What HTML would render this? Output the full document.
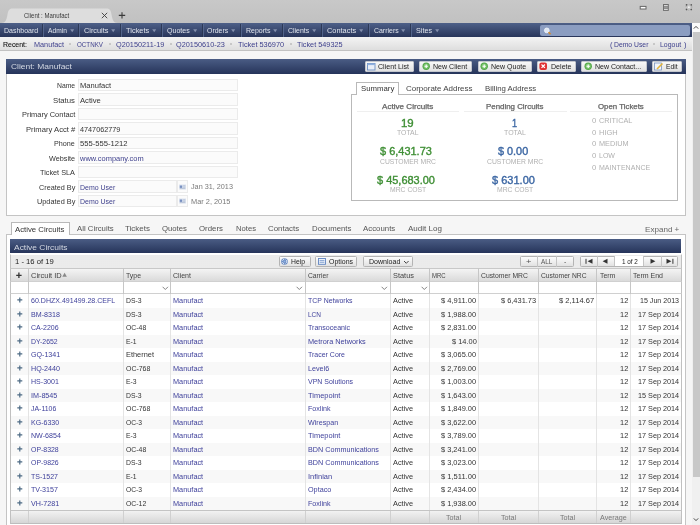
<!DOCTYPE html><html><head><meta charset="utf-8"><style>
*{margin:0;padding:0;box-sizing:border-box}
html,body{width:700px;height:525px;overflow:hidden;background:#f6f6f6;font-family:"Liberation Sans",sans-serif;}
.t{position:absolute;white-space:pre;transform-origin:0 0;}
.r{position:absolute;}
svg{position:absolute;overflow:visible}
#w{position:absolute;left:0;top:0;width:700px;height:525px;overflow:hidden;will-change:transform;}
</style></head><body><div id="w"><div class="r" style="left:0.00px;top:0.00px;width:700.00px;height:23.00px;background:linear-gradient(#c8c8c8,#c1c1c1);"></div>
<svg style="left:0.00px;top:0.00px" width="130" height="23" viewBox="0 0 130 23"><path d="M1.5,23 C5.5,23 6.6,19.5 7.5,14.5 C8.3,10 9.6,8.6 12.8,8.6 L106.5,8.6 C109.7,8.6 110.6,10 111.5,14.5 C112.4,19.5 113.5,23 117.5,23 Z" fill="#dddddd"/><path d="M101.8,12.8 L107.2,18.2 M107.2,12.8 L101.8,18.2" stroke="#3c3c3c" stroke-width="0.9"/><path d="M118.8,15.4 L125.2,15.4 M122,12.2 L122,18.6" stroke="#3a3a3a" stroke-width="1.1"/></svg>
<div class="t" style="left:23.80px;top:10.60px;font-size:7.50px;line-height:10px;color:#3a3a3a;transform:scaleX(0.8032);">Client : Manufact</div>
<svg style="left:630.00px;top:0.00px" width="70" height="23" viewBox="0 0 70 23"><rect x="10.2" y="6.4" width="5.8" height="2.6" fill="#fff" stroke="#666" stroke-width="1"/><rect x="33" y="4" width="5.8" height="6.9" fill="#6f6f6f"/><rect x="34" y="5.2" width="3.8" height="1" fill="#f2f2f2"/><rect x="34" y="8.8" width="3.8" height="1" fill="#f2f2f2"/><rect x="34" y="6.6" width="3.8" height="1.8" fill="#9a9a9a"/><circle cx="58.9" cy="7.25" r="2.9" fill="none" stroke="#9a9a9a" stroke-width="0.8" stroke-dasharray="1.2 1.1"/><circle cx="56.5" cy="4.9" r="0.8" fill="#555"/><circle cx="61.3" cy="4.9" r="0.8" fill="#555"/><circle cx="56.5" cy="9.6" r="0.8" fill="#555"/><circle cx="61.3" cy="9.6" r="0.8" fill="#555"/><circle cx="58.9" cy="7.25" r="1" fill="#f0f0f0"/></svg>
<div class="r" style="left:0.00px;top:23.00px;width:692.00px;height:13.80px;background:linear-gradient(#4e6088,#28355a);"></div>
<div class="r" style="left:41.50px;top:23.50px;width:1.00px;height:13.30px;background:#27324e;opacity:.8;"></div>
<div class="r" style="left:42.50px;top:23.50px;width:1.00px;height:13.30px;background:#5a6b92;opacity:.8;"></div>
<div class="r" style="left:77.50px;top:23.50px;width:1.00px;height:13.30px;background:#27324e;opacity:.8;"></div>
<div class="r" style="left:78.50px;top:23.50px;width:1.00px;height:13.30px;background:#5a6b92;opacity:.8;"></div>
<div class="r" style="left:119.50px;top:23.50px;width:1.00px;height:13.30px;background:#27324e;opacity:.8;"></div>
<div class="r" style="left:120.50px;top:23.50px;width:1.00px;height:13.30px;background:#5a6b92;opacity:.8;"></div>
<div class="r" style="left:160.50px;top:23.50px;width:1.00px;height:13.30px;background:#27324e;opacity:.8;"></div>
<div class="r" style="left:161.50px;top:23.50px;width:1.00px;height:13.30px;background:#5a6b92;opacity:.8;"></div>
<div class="r" style="left:201.50px;top:23.50px;width:1.00px;height:13.30px;background:#27324e;opacity:.8;"></div>
<div class="r" style="left:202.50px;top:23.50px;width:1.00px;height:13.30px;background:#5a6b92;opacity:.8;"></div>
<div class="r" style="left:239.50px;top:23.50px;width:1.00px;height:13.30px;background:#27324e;opacity:.8;"></div>
<div class="r" style="left:240.50px;top:23.50px;width:1.00px;height:13.30px;background:#5a6b92;opacity:.8;"></div>
<div class="r" style="left:281.50px;top:23.50px;width:1.00px;height:13.30px;background:#27324e;opacity:.8;"></div>
<div class="r" style="left:282.50px;top:23.50px;width:1.00px;height:13.30px;background:#5a6b92;opacity:.8;"></div>
<div class="r" style="left:320.50px;top:23.50px;width:1.00px;height:13.30px;background:#27324e;opacity:.8;"></div>
<div class="r" style="left:321.50px;top:23.50px;width:1.00px;height:13.30px;background:#5a6b92;opacity:.8;"></div>
<div class="r" style="left:367.50px;top:23.50px;width:1.00px;height:13.30px;background:#27324e;opacity:.8;"></div>
<div class="r" style="left:368.50px;top:23.50px;width:1.00px;height:13.30px;background:#5a6b92;opacity:.8;"></div>
<div class="r" style="left:409.50px;top:23.50px;width:1.00px;height:13.30px;background:#27324e;opacity:.8;"></div>
<div class="r" style="left:410.50px;top:23.50px;width:1.00px;height:13.30px;background:#5a6b92;opacity:.8;"></div>
<div class="t" style="left:3.80px;top:26.40px;font-size:6.73px;line-height:10px;color:#dfe3eb;transform:scaleX(1.0417);">Dashboard</div>
<div class="t" style="left:47.80px;top:26.40px;font-size:6.73px;line-height:10px;color:#dfe3eb;transform:scaleX(0.9904);">Admin</div>
<svg style="left:70.10px;top:28.60px" width="5" height="4" viewBox="0 0 5 4"><path d="M0.2,0.3 L4.2,0.3 L2.2,3.3 Z" fill="#8490ad"/></svg>
<div class="t" style="left:84.10px;top:26.40px;font-size:6.73px;line-height:10px;color:#dfe3eb;transform:scaleX(1.0917);">Circuits</div>
<svg style="left:111.40px;top:28.60px" width="5" height="4" viewBox="0 0 5 4"><path d="M0.2,0.3 L4.2,0.3 L2.2,3.3 Z" fill="#8490ad"/></svg>
<div class="t" style="left:125.70px;top:26.40px;font-size:6.73px;line-height:10px;color:#dfe3eb;transform:scaleX(1.1059);">Tickets</div>
<svg style="left:152.10px;top:28.60px" width="5" height="4" viewBox="0 0 5 4"><path d="M0.2,0.3 L4.2,0.3 L2.2,3.3 Z" fill="#8490ad"/></svg>
<div class="t" style="left:166.90px;top:26.40px;font-size:6.73px;line-height:10px;color:#dfe3eb;transform:scaleX(1.0507);">Quotes</div>
<svg style="left:192.80px;top:28.60px" width="5" height="4" viewBox="0 0 5 4"><path d="M0.2,0.3 L4.2,0.3 L2.2,3.3 Z" fill="#8490ad"/></svg>
<div class="t" style="left:206.90px;top:26.40px;font-size:6.73px;line-height:10px;color:#dfe3eb;transform:scaleX(1.0306);">Orders</div>
<svg style="left:231.40px;top:28.60px" width="5" height="4" viewBox="0 0 5 4"><path d="M0.2,0.3 L4.2,0.3 L2.2,3.3 Z" fill="#8490ad"/></svg>
<div class="t" style="left:245.70px;top:26.40px;font-size:6.73px;line-height:10px;color:#dfe3eb;transform:scaleX(1.0397);">Reports</div>
<svg style="left:273.20px;top:28.60px" width="5" height="4" viewBox="0 0 5 4"><path d="M0.2,0.3 L4.2,0.3 L2.2,3.3 Z" fill="#8490ad"/></svg>
<div class="t" style="left:288.00px;top:26.40px;font-size:6.73px;line-height:10px;color:#dfe3eb;transform:scaleX(1.0352);">Clients</div>
<svg style="left:312.10px;top:28.60px" width="5" height="4" viewBox="0 0 5 4"><path d="M0.2,0.3 L4.2,0.3 L2.2,3.3 Z" fill="#8490ad"/></svg>
<div class="t" style="left:326.90px;top:26.40px;font-size:6.73px;line-height:10px;color:#dfe3eb;transform:scaleX(1.0994);">Contacts</div>
<svg style="left:358.90px;top:28.60px" width="5" height="4" viewBox="0 0 5 4"><path d="M0.2,0.3 L4.2,0.3 L2.2,3.3 Z" fill="#8490ad"/></svg>
<div class="t" style="left:373.70px;top:26.40px;font-size:6.73px;line-height:10px;color:#dfe3eb;transform:scaleX(1.0319);">Carriers</div>
<svg style="left:401.20px;top:28.60px" width="5" height="4" viewBox="0 0 5 4"><path d="M0.2,0.3 L4.2,0.3 L2.2,3.3 Z" fill="#8490ad"/></svg>
<div class="t" style="left:415.50px;top:26.40px;font-size:6.73px;line-height:10px;color:#dfe3eb;transform:scaleX(1.0693);">Sites</div>
<svg style="left:434.80px;top:28.60px" width="5" height="4" viewBox="0 0 5 4"><path d="M0.2,0.3 L4.2,0.3 L2.2,3.3 Z" fill="#8490ad"/></svg>
<div class="r" style="left:539.80px;top:24.60px;width:150.20px;height:11.40px;background:#8b9dc1;border-radius:2px;"></div>
<svg style="left:543.00px;top:27.00px" width="10" height="9" viewBox="0 0 10 9"><circle cx="3.8" cy="3.4" r="2.4" fill="#dfe7f4" stroke="#f4f7fb" stroke-width="0.8"/><path d="M5.5,5.2 L7.6,7.3" stroke="#d58a2a" stroke-width="1.6"/></svg>
<div class="r" style="left:692.00px;top:23.00px;width:8.00px;height:502.00px;background:#f0f0f0;"></div>
<div class="r" style="left:692.00px;top:23.00px;width:8.00px;height:9.00px;background:#fafafa;"></div>
<div class="r" style="left:693.00px;top:32.00px;width:7.00px;height:444.50px;background:#c8c8c8;"></div>
<svg style="left:692.00px;top:23.00px" width="8" height="9" viewBox="0 0 8 9"><path d="M1.8,5.6 L4,3.4 L6.2,5.6" fill="none" stroke="#333" stroke-width="0.9"/></svg>
<svg style="left:692.00px;top:515.00px" width="8" height="9" viewBox="0 0 8 9"><path d="M1.8,3.4 L4,5.6 L6.2,3.4" fill="none" stroke="#333" stroke-width="0.9"/></svg>
<div class="r" style="left:0.00px;top:36.80px;width:692.00px;height:12.80px;background:linear-gradient(#f4f4f4,#dedede);"></div>
<div class="r" style="left:0.00px;top:49.60px;width:692.00px;height:1.00px;background:#c2c2c2;"></div>
<div class="t" style="left:3.10px;top:40.30px;font-size:6.78px;line-height:10px;color:#111;transform:scaleX(1.0266);-webkit-text-stroke:0.08px #000;">Recent:</div>
<div class="t" style="left:33.90px;top:40.30px;font-size:6.78px;line-height:10px;color:#3d3f8c;transform:scaleX(1.0752);">Manufact</div>
<div class="t" style="left:77.00px;top:40.30px;font-size:6.78px;line-height:10px;color:#3d3f8c;transform:scaleX(0.9197);">OCTNKV</div>
<div class="t" style="left:115.60px;top:40.30px;font-size:6.78px;line-height:10px;color:#3d3f8c;transform:scaleX(1.0813);">Q20150211-19</div>
<div class="t" style="left:176.40px;top:40.30px;font-size:6.78px;line-height:10px;color:#3d3f8c;transform:scaleX(1.0804);">Q20150610-23</div>
<div class="t" style="left:237.60px;top:40.30px;font-size:6.78px;line-height:10px;color:#3d3f8c;transform:scaleX(1.0929);">Ticket 536970</div>
<div class="t" style="left:297.30px;top:40.30px;font-size:6.78px;line-height:10px;color:#3d3f8c;transform:scaleX(1.0787);">Ticket 549325</div>
<div class="r" style="left:69.40px;top:43.30px;width:2.00px;height:2.00px;background:#bcbcbc;border-radius:1px;"></div>
<div class="r" style="left:108.60px;top:43.30px;width:2.00px;height:2.00px;background:#bcbcbc;border-radius:1px;"></div>
<div class="r" style="left:169.60px;top:43.30px;width:2.00px;height:2.00px;background:#bcbcbc;border-radius:1px;"></div>
<div class="r" style="left:230.20px;top:43.30px;width:2.00px;height:2.00px;background:#bcbcbc;border-radius:1px;"></div>
<div class="r" style="left:289.90px;top:43.30px;width:2.00px;height:2.00px;background:#bcbcbc;border-radius:1px;"></div>
<div class="t" style="left:609.50px;top:40.30px;font-size:6.78px;line-height:10px;color:#3d3f8c;transform:scaleX(1.1049);">(</div>
<div class="t" style="left:613.70px;top:40.30px;font-size:6.78px;line-height:10px;color:#3d3f8c;transform:scaleX(1.0056);">Demo User</div>
<div class="r" style="left:653.20px;top:43.30px;width:2.00px;height:2.00px;background:#bcbcbc;border-radius:1px;"></div>
<div class="t" style="left:660.00px;top:40.30px;font-size:6.78px;line-height:10px;color:#3d3f8c;transform:scaleX(1.0216);">Logout</div>
<div class="t" style="left:684.00px;top:40.30px;font-size:6.78px;line-height:10px;color:#3d3f8c;transform:scaleX(1.1049);">)</div>
<div class="r" style="left:6.00px;top:58.50px;width:680.00px;height:157.50px;background:#fff;border:1px solid #c4c4c4;"></div>
<div class="r" style="left:6.00px;top:58.50px;width:680.00px;height:15.30px;background:linear-gradient(#4a5c84,#26345a);"></div>
<div class="t" style="left:11.00px;top:62.40px;font-size:7.89px;line-height:10px;color:#d4d9e3;transform:scaleX(1.0704);">Client: Manufact</div>
<div class="r" style="left:364.70px;top:60.70px;width:49.30px;height:11.40px;background:linear-gradient(#f8f8f8,#e2e2e2);border:1px solid #c4c7ce;border-radius:1px;"></div>
<svg style="left:367px;top:62.8px" width="9" height="8"><rect x="0.5" y="0.5" width="7.5" height="6.5" fill="#e8eef8" stroke="#6d8fc4" stroke-width="0.9"/><rect x="0.5" y="0.5" width="7.5" height="1.6" fill="#8fb0e0"/></svg>
<div class="t" style="left:378.00px;top:62.40px;font-size:6.68px;line-height:10px;color:#222;transform:scaleX(1.0606);">Client List</div>
<div class="r" style="left:419.30px;top:60.70px;width:52.70px;height:11.40px;background:linear-gradient(#f8f8f8,#e2e2e2);border:1px solid #c4c7ce;border-radius:1px;"></div>
<svg style="left:421.5px;top:62.2px" width="9" height="9"><circle cx="4.2" cy="4.2" r="3.7" fill="#55a84a"/><circle cx="4.2" cy="4.2" r="2.6" fill="#7cc56e"/><path d="M2.5,4.2 L5.9,4.2 M4.2,2.5 L4.2,5.9" stroke="#fff" stroke-width="1.1"/></svg>
<div class="t" style="left:432.70px;top:62.40px;font-size:6.68px;line-height:10px;color:#222;transform:scaleX(1.0592);">New Client</div>
<div class="r" style="left:477.70px;top:60.70px;width:54.30px;height:11.40px;background:linear-gradient(#f8f8f8,#e2e2e2);border:1px solid #c4c7ce;border-radius:1px;"></div>
<svg style="left:480px;top:62.2px" width="9" height="9"><circle cx="4.2" cy="4.2" r="3.7" fill="#55a84a"/><circle cx="4.2" cy="4.2" r="2.6" fill="#7cc56e"/><path d="M2.5,4.2 L5.9,4.2 M4.2,2.5 L4.2,5.9" stroke="#fff" stroke-width="1.1"/></svg>
<div class="t" style="left:490.80px;top:62.40px;font-size:6.68px;line-height:10px;color:#222;transform:scaleX(1.0538);">New Quote</div>
<div class="r" style="left:536.80px;top:60.70px;width:39.40px;height:11.40px;background:linear-gradient(#f8f8f8,#e2e2e2);border:1px solid #c4c7ce;border-radius:1px;"></div>
<svg style="left:539px;top:62.4px" width="9" height="9"><rect x="0.4" y="0.4" width="7.6" height="7.6" rx="2" fill="#e03030"/><path d="M2.5,2.5 L5.9,5.9 M5.9,2.5 L2.5,5.9" stroke="#fff" stroke-width="1.2"/></svg>
<div class="t" style="left:550.50px;top:62.40px;font-size:6.68px;line-height:10px;color:#222;transform:scaleX(1.0618);">Delete</div>
<div class="r" style="left:581.10px;top:60.70px;width:66.00px;height:11.40px;background:linear-gradient(#f8f8f8,#e2e2e2);border:1px solid #c4c7ce;border-radius:1px;"></div>
<svg style="left:583.5px;top:62.2px" width="9" height="9"><circle cx="4.2" cy="4.2" r="3.7" fill="#55a84a"/><circle cx="4.2" cy="4.2" r="2.6" fill="#7cc56e"/><path d="M2.5,4.2 L5.9,4.2 M4.2,2.5 L4.2,5.9" stroke="#fff" stroke-width="1.1"/></svg>
<div class="t" style="left:595.00px;top:62.40px;font-size:6.68px;line-height:10px;color:#222;transform:scaleX(1.0549);">New Contact...</div>
<div class="r" style="left:652.30px;top:60.70px;width:30.20px;height:11.40px;background:linear-gradient(#f8f8f8,#e2e2e2);border:1px solid #c4c7ce;border-radius:1px;"></div>
<svg style="left:654.3px;top:62.4px" width="10" height="9"><rect x="0.5" y="1" width="7" height="7" fill="#f2f5fa" stroke="#7b95c0" stroke-width="0.8"/><path d="M3,7 L8.5,1.5" stroke="#e2b33a" stroke-width="1.6"/></svg>
<div class="t" style="left:665.70px;top:62.40px;font-size:6.68px;line-height:10px;color:#222;transform:scaleX(0.9995);">Edit</div>
<div class="t" style="left:56.90px;top:81.20px;font-size:6.89px;line-height:10px;color:#333;transform:scaleX(0.9901);">Name</div>
<div class="r" style="left:78.00px;top:78.90px;width:160.00px;height:12.50px;background:#fbfbfb;border:1px solid #ebebeb;"></div>
<div class="t" style="left:79.50px;top:81.20px;font-size:6.89px;line-height:10px;color:#333;transform:scaleX(1.1010);">Manufact</div>
<div class="t" style="left:53.10px;top:95.70px;font-size:6.89px;line-height:10px;color:#333;transform:scaleX(1.1263);">Status</div>
<div class="r" style="left:78.00px;top:93.40px;width:160.00px;height:12.50px;background:#fbfbfb;border:1px solid #ebebeb;"></div>
<div class="t" style="left:79.50px;top:95.70px;font-size:6.89px;line-height:10px;color:#333;transform:scaleX(1.1140);">Active</div>
<div class="t" style="left:21.60px;top:110.20px;font-size:6.89px;line-height:10px;color:#333;transform:scaleX(1.0831);">Primary Contact</div>
<div class="r" style="left:78.00px;top:107.90px;width:160.00px;height:12.50px;background:#fbfbfb;border:1px solid #ebebeb;"></div>
<div class="t" style="left:25.70px;top:124.70px;font-size:6.89px;line-height:10px;color:#333;transform:scaleX(1.1123);">Primary Acct #</div>
<div class="r" style="left:78.00px;top:122.40px;width:160.00px;height:12.50px;background:#fbfbfb;border:1px solid #ebebeb;"></div>
<div class="t" style="left:79.50px;top:124.70px;font-size:6.89px;line-height:10px;color:#333;transform:scaleX(1.0568);">4747062779</div>
<div class="t" style="left:54.20px;top:139.20px;font-size:6.89px;line-height:10px;color:#333;transform:scaleX(1.0489);">Phone</div>
<div class="r" style="left:78.00px;top:136.90px;width:160.00px;height:12.50px;background:#fbfbfb;border:1px solid #ebebeb;"></div>
<div class="t" style="left:79.50px;top:139.20px;font-size:6.89px;line-height:10px;color:#333;transform:scaleX(1.1116);">555-555-1212</div>
<div class="t" style="left:49.00px;top:153.70px;font-size:6.89px;line-height:10px;color:#333;transform:scaleX(1.0540);">Website</div>
<div class="r" style="left:78.00px;top:151.40px;width:160.00px;height:12.50px;background:#fbfbfb;border:1px solid #ebebeb;"></div>
<div class="t" style="left:79.51px;top:153.70px;font-size:6.89px;line-height:10px;color:#3d3f8c;transform:scaleX(1.0840);">www.company.com</div>
<div class="t" style="left:40.10px;top:168.20px;font-size:6.89px;line-height:10px;color:#333;transform:scaleX(1.0587);">Ticket SLA</div>
<div class="r" style="left:78.00px;top:165.90px;width:160.00px;height:12.50px;background:#fbfbfb;border:1px solid #ebebeb;"></div>
<div class="t" style="left:38.70px;top:182.70px;font-size:6.89px;line-height:10px;color:#333;transform:scaleX(1.0562);">Created By</div>
<div class="r" style="left:78.00px;top:180.40px;width:98.80px;height:12.50px;background:#fbfbfb;border:1px solid #ebebeb;"></div>
<div class="t" style="left:79.50px;top:182.70px;font-size:6.89px;line-height:10px;color:#3d3f8c;transform:scaleX(1.0131);">Demo User</div>
<div class="r" style="left:177.30px;top:180.40px;width:10.70px;height:12.50px;background:#fbfbfb;border:1px solid #ebebeb;"></div>
<svg style="left:179.00px;top:183.70px" width="8" height="6" viewBox="0 0 8 6"><rect x="0" y="0.5" width="7" height="5" fill="#dde4f0"/><rect x="0.8" y="1.5" width="2.4" height="2.4" fill="#7890c0"/><path d="M4.1,1.8 H6.3 M4.1,3.2 H6.3 M1,4.6 H6.3" stroke="#a0aec8" stroke-width="0.6"/></svg>
<div class="t" style="left:36.70px;top:197.20px;font-size:6.89px;line-height:10px;color:#333;transform:scaleX(1.0665);">Updated By</div>
<div class="r" style="left:78.00px;top:194.90px;width:98.80px;height:12.50px;background:#fbfbfb;border:1px solid #ebebeb;"></div>
<div class="t" style="left:79.50px;top:197.20px;font-size:6.89px;line-height:10px;color:#3d3f8c;transform:scaleX(1.0131);">Demo User</div>
<div class="r" style="left:177.30px;top:194.90px;width:10.70px;height:12.50px;background:#fbfbfb;border:1px solid #ebebeb;"></div>
<svg style="left:179.00px;top:198.20px" width="8" height="6" viewBox="0 0 8 6"><rect x="0" y="0.5" width="7" height="5" fill="#dde4f0"/><rect x="0.8" y="1.5" width="2.4" height="2.4" fill="#7890c0"/><path d="M4.1,1.8 H6.3 M4.1,3.2 H6.3 M1,4.6 H6.3" stroke="#a0aec8" stroke-width="0.6"/></svg>
<div class="t" style="left:191.00px;top:182.40px;font-size:6.89px;line-height:10px;color:#7a7a7a;transform:scaleX(1.0541);">Jan 31, 2013</div>
<div class="t" style="left:191.00px;top:196.90px;font-size:6.89px;line-height:10px;color:#7a7a7a;transform:scaleX(1.0744);">Mar 2, 2015</div>
<div class="r" style="left:351.00px;top:94.00px;width:327.00px;height:106.60px;background:#fff;border:1px solid #b9b9b9;"></div>
<div class="r" style="left:356.30px;top:82.20px;width:42.60px;height:13.00px;background:#fff;border:1px solid #b9b9b9;border-bottom:none;"></div>
<div class="t" style="left:360.60px;top:84.10px;font-size:7.31px;line-height:10px;color:#333;transform:scaleX(1.0675);">Summary</div>
<div class="t" style="left:406.00px;top:84.10px;font-size:7.31px;line-height:10px;color:#444;transform:scaleX(1.0937);">Corporate Address</div>
<div class="t" style="left:484.70px;top:84.10px;font-size:7.31px;line-height:10px;color:#444;transform:scaleX(1.0714);">Billing Address</div>
<div class="t" style="left:381.90px;top:102.00px;font-size:6.89px;line-height:10px;color:#666;transform:scaleX(1.1776);-webkit-text-stroke:0.25px currentColor;">Active Circuits</div>
<div class="t" style="left:485.70px;top:102.00px;font-size:6.89px;line-height:10px;color:#666;transform:scaleX(1.1482);-webkit-text-stroke:0.25px currentColor;">Pending Circuits</div>
<div class="t" style="left:598.20px;top:102.00px;font-size:6.89px;line-height:10px;color:#666;transform:scaleX(1.1415);-webkit-text-stroke:0.25px currentColor;">Open Tickets</div>
<div class="r" style="left:357.00px;top:110.80px;width:102.00px;height:1.00px;background:#efefef;"></div>
<div class="r" style="left:464.00px;top:110.80px;width:102.50px;height:1.00px;background:#efefef;"></div>
<div class="r" style="left:570.00px;top:110.80px;width:102.00px;height:1.00px;background:#efefef;"></div>
<div class="t" style="left:401.40px;top:117.70px;font-size:10.18px;line-height:12px;color:#3f8f35;transform:scaleX(1.1223);-webkit-text-stroke:0.35px currentColor;">19</div>
<div class="t" style="left:397.00px;top:127.90px;font-size:7.21px;line-height:10px;color:#b0b0b0;transform:scaleX(0.9530);">TOTAL</div>
<div class="t" style="left:380.30px;top:146.00px;font-size:10.18px;line-height:12px;color:#3f8f35;transform:scaleX(1.0790);-webkit-text-stroke:0.35px currentColor;">$ 6,431.73</div>
<div class="t" style="left:380.00px;top:156.90px;font-size:7.21px;line-height:10px;color:#b0b0b0;transform:scaleX(0.9407);">CUSTOMER MRC</div>
<div class="t" style="left:377.00px;top:174.70px;font-size:10.18px;line-height:12px;color:#3f8f35;transform:scaleX(1.0789);-webkit-text-stroke:0.35px currentColor;">$ 45,683.00</div>
<div class="t" style="left:389.80px;top:185.20px;font-size:7.21px;line-height:10px;color:#b0b0b0;transform:scaleX(0.9443);">MRC COST</div>
<div class="t" style="left:512.10px;top:117.70px;font-size:10.18px;line-height:12px;color:#3b66a3;transform:scaleX(0.9014);-webkit-text-stroke:0.35px currentColor;">1</div>
<div class="t" style="left:503.90px;top:127.90px;font-size:7.21px;line-height:10px;color:#b0b0b0;transform:scaleX(0.9707);">TOTAL</div>
<div class="t" style="left:497.70px;top:146.00px;font-size:10.18px;line-height:12px;color:#3b66a3;transform:scaleX(1.0675);-webkit-text-stroke:0.35px currentColor;">$ 0.00</div>
<div class="t" style="left:486.70px;top:156.90px;font-size:7.21px;line-height:10px;color:#b0b0b0;transform:scaleX(0.9457);">CUSTOMER MRC</div>
<div class="t" style="left:491.50px;top:174.70px;font-size:10.18px;line-height:12px;color:#3b66a3;transform:scaleX(1.0829);-webkit-text-stroke:0.35px currentColor;">$ 631.00</div>
<div class="t" style="left:496.70px;top:185.20px;font-size:7.21px;line-height:10px;color:#b0b0b0;transform:scaleX(0.9443);">MRC COST</div>
<div class="t" style="left:592.00px;top:116.30px;font-size:7.21px;line-height:10px;color:#b0b0b0;transform:scaleX(1.0791);">0</div>
<div class="t" style="left:599.00px;top:116.30px;font-size:7.21px;line-height:10px;color:#b0b0b0;transform:scaleX(1.0171);">CRITICAL</div>
<div class="t" style="left:592.00px;top:127.60px;font-size:7.21px;line-height:10px;color:#b0b0b0;transform:scaleX(1.0791);">0</div>
<div class="t" style="left:599.00px;top:127.60px;font-size:7.21px;line-height:10px;color:#b0b0b0;transform:scaleX(1.0377);">HIGH</div>
<div class="t" style="left:592.00px;top:139.20px;font-size:7.21px;line-height:10px;color:#b0b0b0;transform:scaleX(1.0791);">0</div>
<div class="t" style="left:599.00px;top:139.20px;font-size:7.21px;line-height:10px;color:#b0b0b0;transform:scaleX(1.0161);">MEDIUM</div>
<div class="t" style="left:592.00px;top:150.60px;font-size:7.21px;line-height:10px;color:#b0b0b0;transform:scaleX(1.0791);">0</div>
<div class="t" style="left:599.00px;top:150.60px;font-size:7.21px;line-height:10px;color:#b0b0b0;transform:scaleX(0.9744);">LOW</div>
<div class="t" style="left:592.00px;top:162.60px;font-size:7.21px;line-height:10px;color:#b0b0b0;transform:scaleX(1.0791);">0</div>
<div class="t" style="left:599.00px;top:162.60px;font-size:7.21px;line-height:10px;color:#b0b0b0;transform:scaleX(0.9779);">MAINTENANCE</div>
<div class="r" style="left:6.00px;top:234.00px;width:680.00px;height:296.00px;background:#fff;border:1px solid #c4c4c4;"></div>
<div class="r" style="left:11.00px;top:222.30px;width:58.50px;height:12.70px;background:#fff;border:1px solid #b9b9b9;border-bottom:none;"></div>
<div class="t" style="left:15.40px;top:224.50px;font-size:7.31px;line-height:10px;color:#333;transform:scaleX(1.0662);">Active Circuits</div>
<div class="t" style="left:76.60px;top:224.40px;font-size:7.31px;line-height:10px;color:#555;transform:scaleX(1.0653);">All Circuits</div>
<div class="t" style="left:125.00px;top:224.40px;font-size:7.31px;line-height:10px;color:#555;transform:scaleX(1.0920);">Tickets</div>
<div class="t" style="left:162.00px;top:224.40px;font-size:7.31px;line-height:10px;color:#555;transform:scaleX(1.0602);">Quotes</div>
<div class="t" style="left:199.40px;top:224.40px;font-size:7.31px;line-height:10px;color:#555;transform:scaleX(1.0737);">Orders</div>
<div class="t" style="left:235.60px;top:224.40px;font-size:7.31px;line-height:10px;color:#555;transform:scaleX(1.0469);">Notes</div>
<div class="t" style="left:267.80px;top:224.40px;font-size:7.31px;line-height:10px;color:#555;transform:scaleX(1.0810);">Contacts</div>
<div class="t" style="left:311.50px;top:224.40px;font-size:7.31px;line-height:10px;color:#555;transform:scaleX(1.0677);">Documents</div>
<div class="t" style="left:363.00px;top:224.40px;font-size:7.31px;line-height:10px;color:#555;transform:scaleX(1.0737);">Accounts</div>
<div class="t" style="left:408.00px;top:224.40px;font-size:7.31px;line-height:10px;color:#555;transform:scaleX(1.1000);">Audit Log</div>
<div class="t" style="left:645.00px;top:224.90px;font-size:7.31px;line-height:10px;color:#666;transform:scaleX(1.1059);">Expand +</div>
<div class="r" style="left:10.00px;top:239.10px;width:671.30px;height:14.40px;background:linear-gradient(#4a5c84,#26345a);"></div>
<div class="t" style="left:14.20px;top:242.90px;font-size:7.90px;line-height:10px;color:#d4d9e3;transform:scaleX(1.0694);">Active Circuits</div>
<div class="r" style="left:10.00px;top:253.50px;width:672.00px;height:14.90px;background-color:#f0f0f0;background-image:radial-gradient(circle,#e2e2e2 0.55px,transparent 0.8px);background-size:2px 2px;border-top:1px solid #fff;border-left:1px solid #c0c0c0;border-right:1px solid #c0c0c0;"></div>
<div class="t" style="left:14.90px;top:257.40px;font-size:6.89px;line-height:10px;color:#222;transform:scaleX(1.1131);">1 - 16 of 19</div>
<div class="r" style="left:278.60px;top:255.60px;width:32.10px;height:11.00px;background:linear-gradient(#fcfcfc,#e2e2e2);border:1px solid #b4b4b4;border-radius:1.5px;"></div>
<div class="r" style="left:315.40px;top:255.60px;width:42.00px;height:11.00px;background:linear-gradient(#fcfcfc,#e2e2e2);border:1px solid #b4b4b4;border-radius:1.5px;"></div>
<div class="r" style="left:363.20px;top:255.60px;width:49.90px;height:11.00px;background:linear-gradient(#fcfcfc,#e2e2e2);border:1px solid #b4b4b4;border-radius:1.5px;"></div>
<svg style="left:281.20px;top:257.60px" width="8" height="8" viewBox="0 0 8 8"><circle cx="3.5" cy="3.5" r="3.3" fill="#6a8cc4"/><circle cx="3.5" cy="3.5" r="2.2" fill="none" stroke="#e6eefa" stroke-width="1" stroke-dasharray="2 1.5"/><circle cx="3.5" cy="3.5" r="1.1" fill="#8fb0e0"/></svg>
<div class="t" style="left:291.40px;top:257.20px;font-size:6.68px;line-height:10px;color:#222;transform:scaleX(1.0192);">Help</div>
<svg style="left:318.00px;top:257.80px" width="8" height="7" viewBox="0 0 8 7"><rect x="0.5" y="0.5" width="7" height="5.8" fill="#eef3fa" stroke="#5f84c0" stroke-width="0.9"/><path d="M1.6,2.6 H6.4 M1.6,4.3 H6.4" stroke="#5f84c0" stroke-width="0.7"/></svg>
<div class="t" style="left:328.90px;top:257.20px;font-size:6.68px;line-height:10px;color:#222;transform:scaleX(1.0429);">Options</div>
<div class="t" style="left:368.60px;top:257.20px;font-size:6.68px;line-height:10px;color:#222;transform:scaleX(1.0573);">Download</div>
<svg style="left:402.80px;top:260.00px" width="7" height="5" viewBox="0 0 7 5"><path d="M1,1 L3.3,3.3 L5.6,1" fill="none" stroke="#333" stroke-width="0.9"/></svg>
<div class="r" style="left:519.80px;top:255.60px;width:54.00px;height:11.00px;background:linear-gradient(#fcfcfc,#e2e2e2);border:1px solid #b4b4b4;border-radius:1.5px;"></div>
<div class="r" style="left:537.00px;top:255.60px;width:1.00px;height:11.00px;background:#c4c4c4;"></div>
<div class="r" style="left:556.30px;top:255.60px;width:1.00px;height:11.00px;background:#c4c4c4;"></div>
<div class="t" style="left:525.68px;top:257.20px;font-size:6.89px;line-height:10px;color:#555;transform:scaleX(1.3537);">+</div>
<div class="t" style="left:541.14px;top:257.20px;font-size:6.68px;line-height:10px;color:#555;transform:scaleX(0.9535);">ALL</div>
<div class="t" style="left:564.03px;top:257.20px;font-size:6.89px;line-height:10px;color:#555;transform:scaleX(1.0227);">-</div>
<div class="r" style="left:580.20px;top:255.60px;width:98.20px;height:11.00px;background:linear-gradient(#fcfcfc,#e2e2e2);border:1px solid #b4b4b4;border-radius:1.5px;"></div>
<div class="r" style="left:597.40px;top:255.60px;width:1.00px;height:11.00px;background:#c4c4c4;"></div>
<div class="r" style="left:661.20px;top:255.60px;width:1.00px;height:11.00px;background:#c4c4c4;"></div>
<div class="r" style="left:614.00px;top:256.30px;width:30.20px;height:9.70px;background:#fff;border-left:1px solid #c4c4c4;border-right:1px solid #c4c4c4;"></div>
<div class="t" style="left:621.90px;top:257.20px;font-size:6.68px;line-height:10px;color:#222;transform:scaleX(0.9516);">1 of 2</div>
<svg style="left:582.00px;top:257.00px" width="100" height="9" viewBox="0 0 100 9"><rect x="3.5" y="1.8" width="1" height="5" fill="#333"/><path d="M10.5,1.8 L5.6,4.3 L10.5,6.8 Z" fill="#333"/><path d="M25.5,1.8 L20.6,4.3 L25.5,6.8 Z" fill="#333"/><path d="M68.5,1.8 L73.4,4.3 L68.5,6.8 Z" fill="#333"/><path d="M84.5,1.8 L89.4,4.3 L84.5,6.8 Z" fill="#333"/><rect x="90.4" y="1.8" width="1" height="5" fill="#333"/></svg>
<div class="r" style="left:10.00px;top:268.00px;width:672.00px;height:14.00px;background:linear-gradient(#f4f4f4,#dadada);border-top:1px solid #c8c8c8;border-bottom:1px solid #d0d0d0;border-left:1px solid #c0c0c0;border-right:1px solid #c0c0c0;"></div>
<div class="r" style="left:10.00px;top:282.00px;width:672.00px;height:12.00px;background:#fff;border-bottom:1px solid #d0d0d0;border-left:1px solid #c0c0c0;border-right:1px solid #c0c0c0;"></div>
<div class="r" style="left:27.80px;top:268.00px;width:1.00px;height:26.00px;background:#c6c6c6;"></div>
<div class="r" style="left:123.10px;top:268.00px;width:1.00px;height:26.00px;background:#c6c6c6;"></div>
<div class="r" style="left:169.90px;top:268.00px;width:1.00px;height:26.00px;background:#c6c6c6;"></div>
<div class="r" style="left:305.10px;top:268.00px;width:1.00px;height:26.00px;background:#c6c6c6;"></div>
<div class="r" style="left:389.90px;top:268.00px;width:1.00px;height:26.00px;background:#c6c6c6;"></div>
<div class="r" style="left:428.90px;top:268.00px;width:1.00px;height:26.00px;background:#c6c6c6;"></div>
<div class="r" style="left:477.90px;top:268.00px;width:1.00px;height:26.00px;background:#c6c6c6;"></div>
<div class="r" style="left:538.10px;top:268.00px;width:1.00px;height:26.00px;background:#c6c6c6;"></div>
<div class="r" style="left:596.10px;top:268.00px;width:1.00px;height:26.00px;background:#c6c6c6;"></div>
<div class="r" style="left:630.10px;top:268.00px;width:1.00px;height:26.00px;background:#c6c6c6;"></div>
<div class="t" style="left:30.90px;top:271.30px;font-size:6.89px;line-height:10px;color:#444;transform:scaleX(1.0874);">Circuit ID</div>
<div class="t" style="left:126.00px;top:271.30px;font-size:6.89px;line-height:10px;color:#444;transform:scaleX(1.0042);">Type</div>
<div class="t" style="left:173.00px;top:271.30px;font-size:6.89px;line-height:10px;color:#444;transform:scaleX(1.0217);">Client</div>
<div class="t" style="left:308.00px;top:271.30px;font-size:6.89px;line-height:10px;color:#444;transform:scaleX(0.9784);">Carrier</div>
<div class="t" style="left:393.00px;top:271.30px;font-size:6.89px;line-height:10px;color:#444;transform:scaleX(1.0751);">Status</div>
<div class="t" style="left:432.00px;top:271.30px;font-size:6.89px;line-height:10px;color:#444;transform:scaleX(0.8669);">MRC</div>
<div class="t" style="left:481.00px;top:271.30px;font-size:6.89px;line-height:10px;color:#444;transform:scaleX(0.9901);">Customer MRC</div>
<div class="t" style="left:541.00px;top:271.30px;font-size:6.89px;line-height:10px;color:#444;transform:scaleX(0.9763);">Customer NRC</div>
<div class="t" style="left:599.60px;top:271.30px;font-size:6.89px;line-height:10px;color:#444;transform:scaleX(1.0059);">Term</div>
<div class="t" style="left:633.00px;top:271.30px;font-size:6.89px;line-height:10px;color:#444;transform:scaleX(1.0176);">Term End</div>
<svg style="left:15.50px;top:272.00px" width="6" height="7" viewBox="0 0 6 7"><path d="M0.2,3.3 H5.6 M2.9,0.6 V6" stroke="#333" stroke-width="1.3"/></svg>
<svg style="left:62.40px;top:272.40px" width="6" height="6" viewBox="0 0 6 6"><path d="M0.3,4.8 L2.6,0.8 L4.9,4.8 Z" fill="#888"/></svg>
<svg style="left:162.00px;top:286.00px" width="7" height="5" viewBox="0 0 7 5"><path d="M0.6,0.8 L3.3,3.5 L6,0.8" fill="none" stroke="#666" stroke-width="0.8"/></svg>
<svg style="left:296.40px;top:286.00px" width="7" height="5" viewBox="0 0 7 5"><path d="M0.6,0.8 L3.3,3.5 L6,0.8" fill="none" stroke="#666" stroke-width="0.8"/></svg>
<svg style="left:381.40px;top:286.00px" width="7" height="5" viewBox="0 0 7 5"><path d="M0.6,0.8 L3.3,3.5 L6,0.8" fill="none" stroke="#666" stroke-width="0.8"/></svg>
<svg style="left:420.60px;top:286.00px" width="7" height="5" viewBox="0 0 7 5"><path d="M0.6,0.8 L3.3,3.5 L6,0.8" fill="none" stroke="#666" stroke-width="0.8"/></svg>
<div class="r" style="left:10.00px;top:294.00px;width:672.00px;height:216.00px;background:#fff;border-left:1px solid #c0c0c0;border-right:1px solid #c0c0c0;"></div>
<div class="r" style="left:11.00px;top:307.50px;width:670.00px;height:13.50px;background:#f8f8f8;"></div>
<div class="r" style="left:11.00px;top:334.50px;width:670.00px;height:13.50px;background:#f8f8f8;"></div>
<div class="r" style="left:11.00px;top:361.50px;width:670.00px;height:13.50px;background:#f8f8f8;"></div>
<div class="r" style="left:11.00px;top:388.50px;width:670.00px;height:13.50px;background:#f8f8f8;"></div>
<div class="r" style="left:11.00px;top:415.50px;width:670.00px;height:13.50px;background:#f8f8f8;"></div>
<div class="r" style="left:11.00px;top:442.50px;width:670.00px;height:13.50px;background:#f8f8f8;"></div>
<div class="r" style="left:11.00px;top:469.50px;width:670.00px;height:13.50px;background:#f8f8f8;"></div>
<div class="r" style="left:11.00px;top:496.50px;width:670.00px;height:13.50px;background:#f8f8f8;"></div>
<div class="r" style="left:27.80px;top:294.00px;width:1.00px;height:216.00px;background:#e4e4e4;"></div>
<div class="r" style="left:123.10px;top:294.00px;width:1.00px;height:216.00px;background:#e4e4e4;"></div>
<div class="r" style="left:169.90px;top:294.00px;width:1.00px;height:216.00px;background:#e4e4e4;"></div>
<div class="r" style="left:305.10px;top:294.00px;width:1.00px;height:216.00px;background:#e4e4e4;"></div>
<div class="r" style="left:389.90px;top:294.00px;width:1.00px;height:216.00px;background:#e4e4e4;"></div>
<div class="r" style="left:428.90px;top:294.00px;width:1.00px;height:216.00px;background:#e4e4e4;"></div>
<div class="r" style="left:477.90px;top:294.00px;width:1.00px;height:216.00px;background:#e4e4e4;"></div>
<div class="r" style="left:538.10px;top:294.00px;width:1.00px;height:216.00px;background:#e4e4e4;"></div>
<div class="r" style="left:596.10px;top:294.00px;width:1.00px;height:216.00px;background:#e4e4e4;"></div>
<div class="r" style="left:630.10px;top:294.00px;width:1.00px;height:216.00px;background:#e4e4e4;"></div>
<svg style="left:16.50px;top:297.20px" width="6" height="6" viewBox="0 0 6 6"><path d="M0.3,2.9 H5.3 M2.8,0.4 V5.4" stroke="#4d6a84" stroke-width="1.2"/></svg>
<div class="t" style="left:30.80px;top:296.20px;font-size:6.89px;line-height:10px;color:#3d3f9a;transform:scaleX(1.0253);">60.DHZX.491499.28.CEFL</div>
<div class="t" style="left:125.80px;top:296.20px;font-size:6.89px;line-height:10px;color:#333;transform:scaleX(0.9947);">DS-3</div>
<div class="t" style="left:172.90px;top:296.20px;font-size:6.89px;line-height:10px;color:#3d3f9a;transform:scaleX(1.0666);">Manufact</div>
<div class="t" style="left:308.20px;top:296.20px;font-size:6.89px;line-height:10px;color:#3d3f9a;transform:scaleX(1.0086);">TCP Networks</div>
<div class="t" style="left:393.00px;top:296.20px;font-size:6.89px;line-height:10px;color:#333;transform:scaleX(1.0716);">Active</div>
<div class="t" style="left:441.25px;top:296.20px;font-size:6.89px;line-height:10px;color:#333;transform:scaleX(1.0965);">$ 4,911.00</div>
<div class="t" style="left:501.15px;top:296.20px;font-size:6.89px;line-height:10px;color:#333;transform:scaleX(1.0791);">$ 6,431.73</div>
<div class="t" style="left:558.95px;top:296.20px;font-size:6.89px;line-height:10px;color:#333;transform:scaleX(1.0965);">$ 2,114.67</div>
<div class="t" style="left:619.63px;top:296.20px;font-size:6.89px;line-height:10px;color:#333;transform:scaleX(1.0791);">12</div>
<div class="t" style="left:639.90px;top:296.20px;font-size:6.89px;line-height:10px;color:#333;transform:scaleX(1.0310);">15 Jun 2013</div>
<svg style="left:16.50px;top:310.70px" width="6" height="6" viewBox="0 0 6 6"><path d="M0.3,2.9 H5.3 M2.8,0.4 V5.4" stroke="#4d6a84" stroke-width="1.2"/></svg>
<div class="t" style="left:30.80px;top:309.70px;font-size:6.89px;line-height:10px;color:#3d3f9a;transform:scaleX(1.0357);">BM-8318</div>
<div class="t" style="left:125.80px;top:309.70px;font-size:6.89px;line-height:10px;color:#333;transform:scaleX(0.9947);">DS-3</div>
<div class="t" style="left:172.90px;top:309.70px;font-size:6.89px;line-height:10px;color:#3d3f9a;transform:scaleX(1.0666);">Manufact</div>
<div class="t" style="left:308.20px;top:309.70px;font-size:6.89px;line-height:10px;color:#3d3f9a;transform:scaleX(0.9443);">LCN</div>
<div class="t" style="left:393.00px;top:309.70px;font-size:6.89px;line-height:10px;color:#333;transform:scaleX(1.0716);">Active</div>
<div class="t" style="left:441.25px;top:309.70px;font-size:6.89px;line-height:10px;color:#333;transform:scaleX(1.0791);">$ 1,988.00</div>
<div class="t" style="left:619.63px;top:309.70px;font-size:6.89px;line-height:10px;color:#333;transform:scaleX(1.0791);">12</div>
<div class="t" style="left:637.80px;top:309.70px;font-size:6.89px;line-height:10px;color:#333;transform:scaleX(1.0542);">17 Sep 2014</div>
<svg style="left:16.50px;top:324.20px" width="6" height="6" viewBox="0 0 6 6"><path d="M0.3,2.9 H5.3 M2.8,0.4 V5.4" stroke="#4d6a84" stroke-width="1.2"/></svg>
<div class="t" style="left:30.80px;top:323.20px;font-size:6.89px;line-height:10px;color:#3d3f9a;transform:scaleX(1.0196);">CA-2206</div>
<div class="t" style="left:125.80px;top:323.20px;font-size:6.89px;line-height:10px;color:#333;transform:scaleX(0.9991);">OC-48</div>
<div class="t" style="left:172.90px;top:323.20px;font-size:6.89px;line-height:10px;color:#3d3f9a;transform:scaleX(1.0666);">Manufact</div>
<div class="t" style="left:308.20px;top:323.20px;font-size:6.89px;line-height:10px;color:#3d3f9a;transform:scaleX(1.0274);">Transoceanic</div>
<div class="t" style="left:393.00px;top:323.20px;font-size:6.89px;line-height:10px;color:#333;transform:scaleX(1.0716);">Active</div>
<div class="t" style="left:441.25px;top:323.20px;font-size:6.89px;line-height:10px;color:#333;transform:scaleX(1.0791);">$ 2,831.00</div>
<div class="t" style="left:619.63px;top:323.20px;font-size:6.89px;line-height:10px;color:#333;transform:scaleX(1.0791);">12</div>
<div class="t" style="left:637.80px;top:323.20px;font-size:6.89px;line-height:10px;color:#333;transform:scaleX(1.0542);">17 Sep 2014</div>
<svg style="left:16.50px;top:337.70px" width="6" height="6" viewBox="0 0 6 6"><path d="M0.3,2.9 H5.3 M2.8,0.4 V5.4" stroke="#4d6a84" stroke-width="1.2"/></svg>
<div class="t" style="left:30.80px;top:336.70px;font-size:6.89px;line-height:10px;color:#3d3f9a;transform:scaleX(1.0065);">DY-2652</div>
<div class="t" style="left:125.80px;top:336.70px;font-size:6.89px;line-height:10px;color:#333;transform:scaleX(0.9877);">E-1</div>
<div class="t" style="left:172.90px;top:336.70px;font-size:6.89px;line-height:10px;color:#3d3f9a;transform:scaleX(1.0666);">Manufact</div>
<div class="t" style="left:308.20px;top:336.70px;font-size:6.89px;line-height:10px;color:#3d3f9a;transform:scaleX(1.0651);">Metrora Networks</div>
<div class="t" style="left:393.00px;top:336.70px;font-size:6.89px;line-height:10px;color:#333;transform:scaleX(1.0716);">Active</div>
<div class="t" style="left:451.59px;top:336.70px;font-size:6.89px;line-height:10px;color:#333;transform:scaleX(1.0794);">$ 14.00</div>
<div class="t" style="left:619.63px;top:336.70px;font-size:6.89px;line-height:10px;color:#333;transform:scaleX(1.0791);">12</div>
<div class="t" style="left:637.80px;top:336.70px;font-size:6.89px;line-height:10px;color:#333;transform:scaleX(1.0542);">17 Sep 2014</div>
<svg style="left:16.50px;top:351.20px" width="6" height="6" viewBox="0 0 6 6"><path d="M0.3,2.9 H5.3 M2.8,0.4 V5.4" stroke="#4d6a84" stroke-width="1.2"/></svg>
<div class="t" style="left:30.80px;top:350.20px;font-size:6.89px;line-height:10px;color:#3d3f9a;transform:scaleX(1.0312);">GQ-1341</div>
<div class="t" style="left:125.80px;top:350.20px;font-size:6.89px;line-height:10px;color:#333;transform:scaleX(1.0752);">Ethernet</div>
<div class="t" style="left:172.90px;top:350.20px;font-size:6.89px;line-height:10px;color:#3d3f9a;transform:scaleX(1.0666);">Manufact</div>
<div class="t" style="left:308.20px;top:350.20px;font-size:6.89px;line-height:10px;color:#3d3f9a;transform:scaleX(1.0150);">Tracer Core</div>
<div class="t" style="left:393.00px;top:350.20px;font-size:6.89px;line-height:10px;color:#333;transform:scaleX(1.0716);">Active</div>
<div class="t" style="left:441.25px;top:350.20px;font-size:6.89px;line-height:10px;color:#333;transform:scaleX(1.0791);">$ 3,065.00</div>
<div class="t" style="left:619.63px;top:350.20px;font-size:6.89px;line-height:10px;color:#333;transform:scaleX(1.0791);">12</div>
<div class="t" style="left:637.80px;top:350.20px;font-size:6.89px;line-height:10px;color:#333;transform:scaleX(1.0542);">17 Sep 2014</div>
<svg style="left:16.50px;top:364.70px" width="6" height="6" viewBox="0 0 6 6"><path d="M0.3,2.9 H5.3 M2.8,0.4 V5.4" stroke="#4d6a84" stroke-width="1.2"/></svg>
<div class="t" style="left:30.80px;top:363.70px;font-size:6.89px;line-height:10px;color:#3d3f9a;transform:scaleX(1.0399);">HQ-2440</div>
<div class="t" style="left:125.80px;top:363.70px;font-size:6.89px;line-height:10px;color:#333;transform:scaleX(1.0118);">OC-768</div>
<div class="t" style="left:172.90px;top:363.70px;font-size:6.89px;line-height:10px;color:#3d3f9a;transform:scaleX(1.0666);">Manufact</div>
<div class="t" style="left:308.20px;top:363.70px;font-size:6.89px;line-height:10px;color:#3d3f9a;transform:scaleX(1.0487);">Level6</div>
<div class="t" style="left:393.00px;top:363.70px;font-size:6.89px;line-height:10px;color:#333;transform:scaleX(1.0716);">Active</div>
<div class="t" style="left:441.25px;top:363.70px;font-size:6.89px;line-height:10px;color:#333;transform:scaleX(1.0791);">$ 2,769.00</div>
<div class="t" style="left:619.63px;top:363.70px;font-size:6.89px;line-height:10px;color:#333;transform:scaleX(1.0791);">12</div>
<div class="t" style="left:637.80px;top:363.70px;font-size:6.89px;line-height:10px;color:#333;transform:scaleX(1.0542);">17 Sep 2014</div>
<svg style="left:16.50px;top:378.20px" width="6" height="6" viewBox="0 0 6 6"><path d="M0.3,2.9 H5.3 M2.8,0.4 V5.4" stroke="#4d6a84" stroke-width="1.2"/></svg>
<div class="t" style="left:30.80px;top:377.20px;font-size:6.89px;line-height:10px;color:#3d3f9a;transform:scaleX(1.0261);">HS-3001</div>
<div class="t" style="left:125.80px;top:377.20px;font-size:6.89px;line-height:10px;color:#333;transform:scaleX(0.9877);">E-3</div>
<div class="t" style="left:172.90px;top:377.20px;font-size:6.89px;line-height:10px;color:#3d3f9a;transform:scaleX(1.0666);">Manufact</div>
<div class="t" style="left:308.20px;top:377.20px;font-size:6.89px;line-height:10px;color:#3d3f9a;transform:scaleX(1.0166);">VPN Solutions</div>
<div class="t" style="left:393.00px;top:377.20px;font-size:6.89px;line-height:10px;color:#333;transform:scaleX(1.0716);">Active</div>
<div class="t" style="left:441.25px;top:377.20px;font-size:6.89px;line-height:10px;color:#333;transform:scaleX(1.0791);">$ 1,003.00</div>
<div class="t" style="left:619.63px;top:377.20px;font-size:6.89px;line-height:10px;color:#333;transform:scaleX(1.0791);">12</div>
<div class="t" style="left:637.80px;top:377.20px;font-size:6.89px;line-height:10px;color:#333;transform:scaleX(1.0542);">17 Sep 2014</div>
<svg style="left:16.50px;top:391.70px" width="6" height="6" viewBox="0 0 6 6"><path d="M0.3,2.9 H5.3 M2.8,0.4 V5.4" stroke="#4d6a84" stroke-width="1.2"/></svg>
<div class="t" style="left:30.80px;top:390.70px;font-size:6.89px;line-height:10px;color:#3d3f9a;transform:scaleX(1.0452);">IM-8545</div>
<div class="t" style="left:125.80px;top:390.70px;font-size:6.89px;line-height:10px;color:#333;transform:scaleX(0.9947);">DS-3</div>
<div class="t" style="left:172.90px;top:390.70px;font-size:6.89px;line-height:10px;color:#3d3f9a;transform:scaleX(1.0666);">Manufact</div>
<div class="t" style="left:308.20px;top:390.70px;font-size:6.89px;line-height:10px;color:#3d3f9a;transform:scaleX(1.0836);">Timepoint</div>
<div class="t" style="left:393.00px;top:390.70px;font-size:6.89px;line-height:10px;color:#333;transform:scaleX(1.0716);">Active</div>
<div class="t" style="left:441.25px;top:390.70px;font-size:6.89px;line-height:10px;color:#333;transform:scaleX(1.0791);">$ 1,643.00</div>
<div class="t" style="left:619.63px;top:390.70px;font-size:6.89px;line-height:10px;color:#333;transform:scaleX(1.0791);">12</div>
<div class="t" style="left:637.80px;top:390.70px;font-size:6.89px;line-height:10px;color:#333;transform:scaleX(1.0542);">15 Sep 2014</div>
<svg style="left:16.50px;top:405.20px" width="6" height="6" viewBox="0 0 6 6"><path d="M0.3,2.9 H5.3 M2.8,0.4 V5.4" stroke="#4d6a84" stroke-width="1.2"/></svg>
<div class="t" style="left:30.80px;top:404.20px;font-size:6.89px;line-height:10px;color:#3d3f9a;transform:scaleX(1.0072);">JA-1106</div>
<div class="t" style="left:125.80px;top:404.20px;font-size:6.89px;line-height:10px;color:#333;transform:scaleX(1.0118);">OC-768</div>
<div class="t" style="left:172.90px;top:404.20px;font-size:6.89px;line-height:10px;color:#3d3f9a;transform:scaleX(1.0666);">Manufact</div>
<div class="t" style="left:308.20px;top:404.20px;font-size:6.89px;line-height:10px;color:#3d3f9a;transform:scaleX(1.0360);">Foxlink</div>
<div class="t" style="left:393.00px;top:404.20px;font-size:6.89px;line-height:10px;color:#333;transform:scaleX(1.0716);">Active</div>
<div class="t" style="left:441.25px;top:404.20px;font-size:6.89px;line-height:10px;color:#333;transform:scaleX(1.0791);">$ 1,849.00</div>
<div class="t" style="left:619.63px;top:404.20px;font-size:6.89px;line-height:10px;color:#333;transform:scaleX(1.0791);">12</div>
<div class="t" style="left:637.80px;top:404.20px;font-size:6.89px;line-height:10px;color:#333;transform:scaleX(1.0542);">17 Sep 2014</div>
<svg style="left:16.50px;top:418.70px" width="6" height="6" viewBox="0 0 6 6"><path d="M0.3,2.9 H5.3 M2.8,0.4 V5.4" stroke="#4d6a84" stroke-width="1.2"/></svg>
<div class="t" style="left:30.80px;top:417.70px;font-size:6.89px;line-height:10px;color:#3d3f9a;transform:scaleX(1.0221);">KG-6330</div>
<div class="t" style="left:125.80px;top:417.70px;font-size:6.89px;line-height:10px;color:#333;transform:scaleX(0.9801);">OC-3</div>
<div class="t" style="left:172.90px;top:417.70px;font-size:6.89px;line-height:10px;color:#3d3f9a;transform:scaleX(1.0666);">Manufact</div>
<div class="t" style="left:308.20px;top:417.70px;font-size:6.89px;line-height:10px;color:#3d3f9a;transform:scaleX(1.0388);">Wirespan</div>
<div class="t" style="left:393.00px;top:417.70px;font-size:6.89px;line-height:10px;color:#333;transform:scaleX(1.0716);">Active</div>
<div class="t" style="left:441.25px;top:417.70px;font-size:6.89px;line-height:10px;color:#333;transform:scaleX(1.0791);">$ 3,622.00</div>
<div class="t" style="left:619.63px;top:417.70px;font-size:6.89px;line-height:10px;color:#333;transform:scaleX(1.0791);">12</div>
<div class="t" style="left:637.80px;top:417.70px;font-size:6.89px;line-height:10px;color:#333;transform:scaleX(1.0542);">17 Sep 2014</div>
<svg style="left:16.50px;top:432.20px" width="6" height="6" viewBox="0 0 6 6"><path d="M0.3,2.9 H5.3 M2.8,0.4 V5.4" stroke="#4d6a84" stroke-width="1.2"/></svg>
<div class="t" style="left:30.80px;top:431.20px;font-size:6.89px;line-height:10px;color:#3d3f9a;transform:scaleX(1.0322);">NW-6854</div>
<div class="t" style="left:125.80px;top:431.20px;font-size:6.89px;line-height:10px;color:#333;transform:scaleX(0.9877);">E-3</div>
<div class="t" style="left:172.90px;top:431.20px;font-size:6.89px;line-height:10px;color:#3d3f9a;transform:scaleX(1.0666);">Manufact</div>
<div class="t" style="left:308.20px;top:431.20px;font-size:6.89px;line-height:10px;color:#3d3f9a;transform:scaleX(1.0836);">Timepoint</div>
<div class="t" style="left:393.00px;top:431.20px;font-size:6.89px;line-height:10px;color:#333;transform:scaleX(1.0716);">Active</div>
<div class="t" style="left:441.25px;top:431.20px;font-size:6.89px;line-height:10px;color:#333;transform:scaleX(1.0791);">$ 3,789.00</div>
<div class="t" style="left:619.63px;top:431.20px;font-size:6.89px;line-height:10px;color:#333;transform:scaleX(1.0791);">12</div>
<div class="t" style="left:637.80px;top:431.20px;font-size:6.89px;line-height:10px;color:#333;transform:scaleX(1.0542);">17 Sep 2014</div>
<svg style="left:16.50px;top:445.70px" width="6" height="6" viewBox="0 0 6 6"><path d="M0.3,2.9 H5.3 M2.8,0.4 V5.4" stroke="#4d6a84" stroke-width="1.2"/></svg>
<div class="t" style="left:30.80px;top:444.70px;font-size:6.89px;line-height:10px;color:#3d3f9a;transform:scaleX(1.0075);">OP-8328</div>
<div class="t" style="left:125.80px;top:444.70px;font-size:6.89px;line-height:10px;color:#333;transform:scaleX(0.9991);">OC-48</div>
<div class="t" style="left:172.90px;top:444.70px;font-size:6.89px;line-height:10px;color:#3d3f9a;transform:scaleX(1.0666);">Manufact</div>
<div class="t" style="left:308.20px;top:444.70px;font-size:6.89px;line-height:10px;color:#3d3f9a;transform:scaleX(1.0478);">BDN Communications</div>
<div class="t" style="left:393.00px;top:444.70px;font-size:6.89px;line-height:10px;color:#333;transform:scaleX(1.0716);">Active</div>
<div class="t" style="left:441.25px;top:444.70px;font-size:6.89px;line-height:10px;color:#333;transform:scaleX(1.0791);">$ 3,241.00</div>
<div class="t" style="left:619.63px;top:444.70px;font-size:6.89px;line-height:10px;color:#333;transform:scaleX(1.0791);">12</div>
<div class="t" style="left:637.80px;top:444.70px;font-size:6.89px;line-height:10px;color:#333;transform:scaleX(1.0542);">17 Sep 2014</div>
<svg style="left:16.50px;top:459.20px" width="6" height="6" viewBox="0 0 6 6"><path d="M0.3,2.9 H5.3 M2.8,0.4 V5.4" stroke="#4d6a84" stroke-width="1.2"/></svg>
<div class="t" style="left:30.80px;top:458.20px;font-size:6.89px;line-height:10px;color:#3d3f9a;transform:scaleX(1.0075);">OP-9826</div>
<div class="t" style="left:125.80px;top:458.20px;font-size:6.89px;line-height:10px;color:#333;transform:scaleX(0.9947);">DS-3</div>
<div class="t" style="left:172.90px;top:458.20px;font-size:6.89px;line-height:10px;color:#3d3f9a;transform:scaleX(1.0666);">Manufact</div>
<div class="t" style="left:308.20px;top:458.20px;font-size:6.89px;line-height:10px;color:#3d3f9a;transform:scaleX(1.0478);">BDN Communications</div>
<div class="t" style="left:393.00px;top:458.20px;font-size:6.89px;line-height:10px;color:#333;transform:scaleX(1.0716);">Active</div>
<div class="t" style="left:441.25px;top:458.20px;font-size:6.89px;line-height:10px;color:#333;transform:scaleX(1.0791);">$ 3,023.00</div>
<div class="t" style="left:619.63px;top:458.20px;font-size:6.89px;line-height:10px;color:#333;transform:scaleX(1.0791);">12</div>
<div class="t" style="left:637.80px;top:458.20px;font-size:6.89px;line-height:10px;color:#333;transform:scaleX(1.0542);">17 Sep 2014</div>
<svg style="left:16.50px;top:472.70px" width="6" height="6" viewBox="0 0 6 6"><path d="M0.3,2.9 H5.3 M2.8,0.4 V5.4" stroke="#4d6a84" stroke-width="1.2"/></svg>
<div class="t" style="left:30.80px;top:471.70px;font-size:6.89px;line-height:10px;color:#3d3f9a;transform:scaleX(1.0219);">TS-1527</div>
<div class="t" style="left:125.80px;top:471.70px;font-size:6.89px;line-height:10px;color:#333;transform:scaleX(0.9877);">E-1</div>
<div class="t" style="left:172.90px;top:471.70px;font-size:6.89px;line-height:10px;color:#3d3f9a;transform:scaleX(1.0666);">Manufact</div>
<div class="t" style="left:308.20px;top:471.70px;font-size:6.89px;line-height:10px;color:#3d3f9a;transform:scaleX(1.0873);">Infinian</div>
<div class="t" style="left:393.00px;top:471.70px;font-size:6.89px;line-height:10px;color:#333;transform:scaleX(1.0716);">Active</div>
<div class="t" style="left:441.25px;top:471.70px;font-size:6.89px;line-height:10px;color:#333;transform:scaleX(1.0965);">$ 1,511.00</div>
<div class="t" style="left:619.63px;top:471.70px;font-size:6.89px;line-height:10px;color:#333;transform:scaleX(1.0791);">12</div>
<div class="t" style="left:637.80px;top:471.70px;font-size:6.89px;line-height:10px;color:#333;transform:scaleX(1.0542);">17 Sep 2014</div>
<svg style="left:16.50px;top:486.20px" width="6" height="6" viewBox="0 0 6 6"><path d="M0.3,2.9 H5.3 M2.8,0.4 V5.4" stroke="#4d6a84" stroke-width="1.2"/></svg>
<div class="t" style="left:30.80px;top:485.20px;font-size:6.89px;line-height:10px;color:#3d3f9a;transform:scaleX(1.0345);">TV-3157</div>
<div class="t" style="left:125.80px;top:485.20px;font-size:6.89px;line-height:10px;color:#333;transform:scaleX(0.9801);">OC-3</div>
<div class="t" style="left:172.90px;top:485.20px;font-size:6.89px;line-height:10px;color:#3d3f9a;transform:scaleX(1.0666);">Manufact</div>
<div class="t" style="left:308.20px;top:485.20px;font-size:6.89px;line-height:10px;color:#3d3f9a;transform:scaleX(1.0499);">Optaco</div>
<div class="t" style="left:393.00px;top:485.20px;font-size:6.89px;line-height:10px;color:#333;transform:scaleX(1.0716);">Active</div>
<div class="t" style="left:441.25px;top:485.20px;font-size:6.89px;line-height:10px;color:#333;transform:scaleX(1.0791);">$ 2,434.00</div>
<div class="t" style="left:619.63px;top:485.20px;font-size:6.89px;line-height:10px;color:#333;transform:scaleX(1.0791);">12</div>
<div class="t" style="left:637.80px;top:485.20px;font-size:6.89px;line-height:10px;color:#333;transform:scaleX(1.0542);">17 Sep 2014</div>
<svg style="left:16.50px;top:499.70px" width="6" height="6" viewBox="0 0 6 6"><path d="M0.3,2.9 H5.3 M2.8,0.4 V5.4" stroke="#4d6a84" stroke-width="1.2"/></svg>
<div class="t" style="left:30.80px;top:498.70px;font-size:6.89px;line-height:10px;color:#3d3f9a;transform:scaleX(1.0378);">VH-7281</div>
<div class="t" style="left:125.80px;top:498.70px;font-size:6.89px;line-height:10px;color:#333;transform:scaleX(0.9991);">OC-12</div>
<div class="t" style="left:172.90px;top:498.70px;font-size:6.89px;line-height:10px;color:#3d3f9a;transform:scaleX(1.0666);">Manufact</div>
<div class="t" style="left:308.20px;top:498.70px;font-size:6.89px;line-height:10px;color:#3d3f9a;transform:scaleX(1.0360);">Foxlink</div>
<div class="t" style="left:393.00px;top:498.70px;font-size:6.89px;line-height:10px;color:#333;transform:scaleX(1.0716);">Active</div>
<div class="t" style="left:441.25px;top:498.70px;font-size:6.89px;line-height:10px;color:#333;transform:scaleX(1.0791);">$ 1,938.00</div>
<div class="t" style="left:619.63px;top:498.70px;font-size:6.89px;line-height:10px;color:#333;transform:scaleX(1.0791);">12</div>
<div class="t" style="left:637.80px;top:498.70px;font-size:6.89px;line-height:10px;color:#333;transform:scaleX(1.0542);">17 Sep 2014</div>
<div class="r" style="left:10.00px;top:510.00px;width:672.00px;height:14.00px;background:linear-gradient(#f2f2f2,#d6d6d6);border-top:1px solid #c4c4c4;border-left:1px solid #c0c0c0;border-right:1px solid #c0c0c0;border-bottom:1px solid #bdbdbd;"></div>
<div class="r" style="left:27.80px;top:511.00px;width:1.00px;height:12.00px;background:#d0d0d0;"></div>
<div class="r" style="left:123.10px;top:511.00px;width:1.00px;height:12.00px;background:#d0d0d0;"></div>
<div class="r" style="left:169.90px;top:511.00px;width:1.00px;height:12.00px;background:#d0d0d0;"></div>
<div class="r" style="left:305.10px;top:511.00px;width:1.00px;height:12.00px;background:#d0d0d0;"></div>
<div class="r" style="left:389.90px;top:511.00px;width:1.00px;height:12.00px;background:#d0d0d0;"></div>
<div class="r" style="left:428.90px;top:511.00px;width:1.00px;height:12.00px;background:#d0d0d0;"></div>
<div class="r" style="left:477.90px;top:511.00px;width:1.00px;height:12.00px;background:#d0d0d0;"></div>
<div class="r" style="left:538.10px;top:511.00px;width:1.00px;height:12.00px;background:#d0d0d0;"></div>
<div class="r" style="left:596.10px;top:511.00px;width:1.00px;height:12.00px;background:#d0d0d0;"></div>
<div class="r" style="left:630.10px;top:511.00px;width:1.00px;height:12.00px;background:#d0d0d0;"></div>
<div class="t" style="left:446.30px;top:513.00px;font-size:6.89px;line-height:10px;color:#777;transform:scaleX(1.0443);">Total</div>
<div class="t" style="left:500.90px;top:513.00px;font-size:6.89px;line-height:10px;color:#777;transform:scaleX(1.0443);">Total</div>
<div class="t" style="left:560.00px;top:513.00px;font-size:6.89px;line-height:10px;color:#777;transform:scaleX(1.0443);">Total</div>
<div class="t" style="left:600.26px;top:513.00px;font-size:6.89px;line-height:10px;color:#777;transform:scaleX(1.0449);">Average</div></div></body></html>
